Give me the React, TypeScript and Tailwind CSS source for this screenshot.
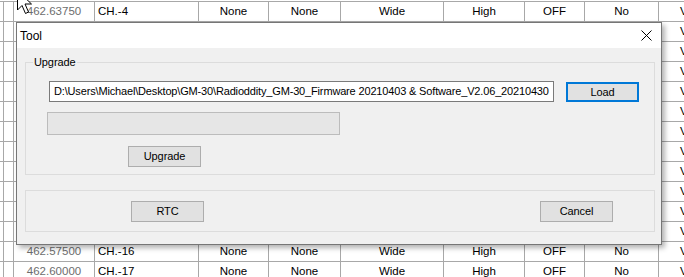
import React from "react";

// Channel grid behind the dialog + the modal "Tool" upgrade window on top.
const COLS = [4, 10, 81, 104, 70, 72, 103, 81, 60, 74, 80];

type Row = { freq: string; ch: string };

const ROWS: Row[] = [
  { freq: "462.63750", ch: "CH.-4" },
  { freq: "462.66250", ch: "CH.-5" },
  { freq: "462.68750", ch: "CH.-6" },
  { freq: "462.71250", ch: "CH.-7" },
  { freq: "467.56250", ch: "CH.-8" },
  { freq: "467.58750", ch: "CH.-9" },
  { freq: "467.61250", ch: "CH.-10" },
  { freq: "467.63750", ch: "CH.-11" },
  { freq: "467.66250", ch: "CH.-12" },
  { freq: "467.68750", ch: "CH.-13" },
  { freq: "467.71250", ch: "CH.-14" },
  { freq: "462.55000", ch: "CH.-15" },
  { freq: "462.57500", ch: "CH.-16" },
  { freq: "462.60000", ch: "CH.-17" },
];

const LINE = "border-[#a8a8a8]";

function GridRow({ row }: { row: Row }) {
  const cells = ["", "", row.freq, row.ch, "None", "None", "Wide", "High", "OFF", "No", "V"];
  return (
    <div className={`flex h-[20px] border-b ${LINE}`}>
      {cells.map((text, i) => (
        <div
          key={i}
          style={{ width: COLS[i] }}
          className={`shrink-0 border-r ${LINE} leading-[19px] whitespace-nowrap overflow-hidden ${
            i === 2
              ? "text-center text-[#6d6d6d]"
              : i === 3
              ? "pl-[3px]"
              : i === 10
              ? "pl-[21px]"
              : "text-center"
          }`}
        >
          {text}
        </div>
      ))}
    </div>
  );
}

function WinButton({
  label,
  focused,
  className,
}: {
  label: string;
  focused?: boolean;
  className?: string;
}) {
  return (
    <div
      className={`flex items-center justify-center bg-[#e1e1e1] ${
        focused ? "border-2 border-[#0078d7]" : "border border-[#adadad]"
      } ${className ?? ""}`}
    >
      {label}
    </div>
  );
}

function Cursor() {
  return (
    <svg
      className="absolute left-[17px] top-[-10px]"
      width="18"
      height="26"
      viewBox="0 0 18 26"
    >
      <path
        d="M0.5 0.5 L0.5 20 L5 15.5 L8.5 23.5 L11.5 22 L8 14 L14.5 14 Z"
        fill="#fff"
        stroke="#000"
        strokeWidth="1"
      />
    </svg>
  );
}

export default function App() {
  return (
    <div
      className="relative w-[684px] h-[277px] overflow-hidden bg-white text-[11.5px] text-black"
      style={{ fontFamily: '"Liberation Sans", Arial, sans-serif' }}
    >
      {/* background channel grid */}
      <div className="w-[800px]">
        <div className={`h-[2px] border-b ${LINE}`} />
        {ROWS.map((r) => (
          <GridRow key={r.ch} row={r} />
        ))}
      </div>

      <Cursor />

      {/* Tool dialog */}
      <div className="absolute left-[16px] top-[22px] w-[646px] h-[223px] border border-[#767676] bg-[#f0f0f0] shadow-[3px_3px_5px_rgba(0,0,0,0.3)] flex flex-col text-[11px] tracking-[-0.1px]">
        <div className="h-[25px] bg-white flex items-center justify-between pl-[3px] pr-[9px]">
          <span className="text-[12px] tracking-normal">Tool</span>
          <svg width="11" height="11" viewBox="0 0 11 11">
            <path d="M0.5 0.5 L10.5 10.5 M10.5 0.5 L0.5 10.5" stroke="#000" strokeWidth="1" />
          </svg>
        </div>

        <div className="flex-1 flex flex-col pl-[8px]">
          {/* Upgrade group */}
          <div className="relative mt-[14px] w-[630px] border border-[#dcdcdc] pb-[7px]">
            <span className="absolute left-[7px] top-[-9px] px-[1px] bg-[#f0f0f0] leading-[16px]">
              Upgrade
            </span>
            <div className="flex items-start mt-[18px] ml-[23px]">
              <div className="w-[505px] h-[21px] border border-[#7a7a7a] bg-white pl-[4px] leading-[19px] whitespace-nowrap overflow-hidden tracking-[-0.16px]">
                D:\Users\Michael\Desktop\GM-30\Radioddity_GM-30_Firmware 20210403 &amp; Software_V2.06_20210430
              </div>
              <WinButton label="Load" focused className="ml-[12px] mt-[1px] w-[73px] h-[20px]" />
            </div>
            <div className="ml-[21px] mt-[10px] w-[293px] h-[23px] border border-[#bcbcbc] bg-[#e6e6e6]" />
            <WinButton label="Upgrade" className="ml-[102px] mt-[11px] w-[73px] h-[21px]" />
          </div>

          {/* RTC group */}
          <div className="mt-[15px] w-[630px] h-[42px] border border-[#dcdcdc] flex items-start pt-[10px]">
            <WinButton label="RTC" className="ml-[105px] w-[73px] h-[21px]" />
            <WinButton label="Cancel" className="ml-[336px] w-[73px] h-[21px]" />
          </div>
        </div>
      </div>
    </div>
  );
}
